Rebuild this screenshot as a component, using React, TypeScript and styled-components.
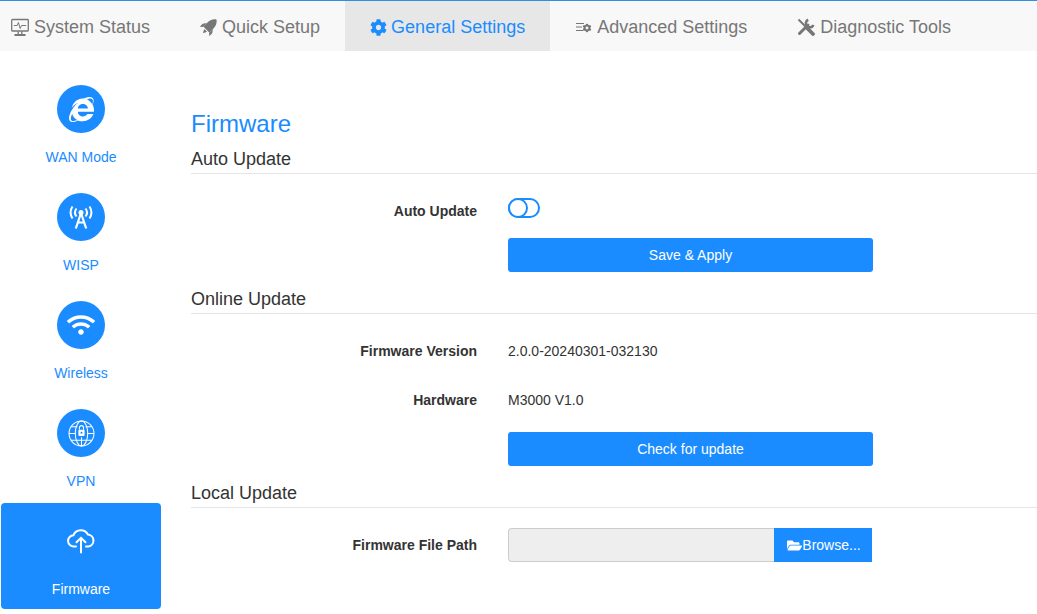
import React from "react";
import styled, { createGlobalStyle } from "styled-components";
import { FaCog, FaFolderOpen, FaInternetExplorer, FaWifi } from "react-icons/fa";

const BLUE = "#1a8cff";

const GlobalStyle = createGlobalStyle`
  html, body {
    margin: 0;
    padding: 0;
    background: #fff;
    overflow: hidden;
    font-family: "Liberation Sans", Arial, sans-serif;
    font-size: 14px;
    color: #333;
  }
`;

function MonitorIcon() {
  return (
    <svg width="18" height="19" viewBox="0 0 18 19" fill="none" stroke="#777" strokeWidth="1.3">
      <rect x="0.7" y="1.5" width="16.6" height="11.5" rx="0.8" />
      <path d="M2.8 7.5h3.4l1.2-3 1.8 6 1.3-3h4.7" strokeWidth="1" />
      <path d="M7.2 13.5v2.6M10.8 13.5v2.6" />
      <path d="M3.5 17h11" strokeWidth="2" />
    </svg>
  );
}

function RocketIcon() {
  return (
    <svg width="17" height="17" viewBox="0 0 17 17" fill="#777">
      <g transform="rotate(45 8.5 8.5)">
        <path d="M8.5-2.8C11.600-.6 12.800 2.500 12.800 6v5.500H4.200V6c0-3.500 1.200-6.600 4.300-8.800Z" />
        <path d="M4.200 6.500 1.800 10v4l2.400-2ZM12.800 6.500l2.400 3.500v4l-2.400-2Z" />
        <path d="M6.500 12.500h4L8.500 16.500Z" />
      </g>
    </svg>
  );
}

function AdvancedIcon() {
  return (
    <svg width="17" height="13" viewBox="0 0 17 13" fill="none" stroke="#777" strokeWidth="1.2">
      <path d="M1 2.500h8M1 6h6M1 9.500h7" />
      <FaCog x={7.500} y={2.500} size={9} color="#777" stroke="none" />
    </svg>
  );
}

function ToolsIcon() {
  return (
    <svg width="18" height="18" viewBox="0 0 18 18" fill="none" stroke="#777">
      <path d="M2.500 15.500 11 7" strokeWidth="3" strokeLinecap="round" />
      <path d="M11.200 1.700A4 4 0 1 0 16.500 7" strokeWidth="2.600" />
      <path d="M1.500 1.500 9 9" strokeWidth="2" />
      <path d="M10.500 10.500l5.500 5.500" strokeWidth="3.800" strokeLinecap="round" />
    </svg>
  );
}

function TowerIcon() {
  return (
    <svg width="24" height="23" viewBox="0 0 24 23" fill="none" stroke="#fff">
      <circle cx="12" cy="6.500" r="2.500" fill="#fff" stroke="none" />
      <path d="M12 7 6.800 22.500M12 7l5.200 15.500M8.800 16.500h6.400" strokeWidth="2.200" />
      <path d="M7.500 2.500a6.500 6.500 0 0 0 0 8M16.500 2.500a6.500 6.500 0 0 1 0 8" strokeWidth="2" />
      <path d="M3.500.5a11 11 0 0 0 0 12M20.500.5a11 11 0 0 1 0 12" strokeWidth="2" />
    </svg>
  );
}

function GlobeLockIcon() {
  return (
    <svg width="27" height="27" viewBox="0 0 26 26" fill="none" stroke="#fff" strokeWidth="1">
      <circle cx="13" cy="13" r="12" />
      <ellipse cx="13" cy="13" rx="6" ry="12" />
      <path d="M13 16.500V25M1 13h6.500M18.500 13H25M3 6.500h6M17 6.500h6M3 19.500h20" />
      <rect x="10" y="9.500" width="6" height="6" rx="1" fill="#fff" stroke="none" />
      <path d="M11 9.500V7.400a2 2 0 0 1 4 0v2.100" />
      <circle cx="13" cy="12.300" r="1" fill={BLUE} stroke="none" />
    </svg>
  );
}

function CloudUploadIcon() {
  return (
    <svg width="28" height="26" viewBox="0 0 28 26" fill="none" stroke="#fff" strokeWidth="2">
      <path d="M9 18.500H7a5.600 5.600 0 0 1-.6-11.200A8 8 0 0 1 21 6.600a6 6 0 0 1 .4 11.900H19" strokeLinecap="round" />
      <path d="M14 24.500V10M9.500 14.300 14 9.800l4.500 4.500" strokeLinecap="round" />
    </svg>
  );
}

const tabs = [
  { label: "System Status", icon: <MonitorIcon /> },
  { label: "Quick Setup", icon: <RocketIcon /> },
  { label: "General Settings", icon: <FaCog size={17} />, active: true },
  { label: "Advanced Settings", icon: <AdvancedIcon /> },
  { label: "Diagnostic Tools", icon: <ToolsIcon /> },
];

const menu = [
  { label: "WAN Mode", icon: <FaInternetExplorer size={25} /> },
  { label: "WISP", icon: <TowerIcon /> },
  { label: "Wireless", icon: <FaWifi size={28} /> },
  { label: "VPN", icon: <GlobeLockIcon /> },
  { label: "Firmware", icon: <CloudUploadIcon />, active: true },
];

export default function App() {
  return (
    <>
      <GlobalStyle />
      <TopNav>
        {tabs.map((tab) => (
          <Tab key={tab.label} $active={tab.active}>
            <TabIcon>{tab.icon}</TabIcon>
            {tab.label}
          </Tab>
        ))}
      </TopNav>
      <Body>
        <SideMenu>
          {menu.map((item) => (
            <MenuItem key={item.label} $active={item.active}>
              <MenuCircle>{item.icon}</MenuCircle>
              <MenuLabel>{item.label}</MenuLabel>
            </MenuItem>
          ))}
        </SideMenu>
        <Content>
          <PageTitle>Firmware</PageTitle>

          <SectionTitle>Auto Update</SectionTitle>
          <FormRow $height={47}>
            <FieldLabel>Auto Update</FieldLabel>
            <Toggle />
          </FormRow>
          <ButtonRow $top={17}>
            <PrimaryButton>Save &amp; Apply</PrimaryButton>
          </ButtonRow>

          <SectionTitle>Online Update</SectionTitle>
          <FormRow $height={47}>
            <FieldLabel>Firmware Version</FieldLabel>
            <FieldValue>2.0.0-20240301-032130</FieldValue>
          </FormRow>
          <FormRow $height={49}>
            <FieldLabel>Hardware</FieldLabel>
            <FieldValue>M3000 V1.0</FieldValue>
          </FormRow>
          <ButtonRow $top={22}>
            <PrimaryButton>Check for update</PrimaryButton>
          </ButtonRow>

          <SectionTitle>Local Update</SectionTitle>
          <FileRow>
            <FieldLabel>Firmware File Path</FieldLabel>
            <FileInput />
            <BrowseButton>
              <FaFolderOpen size={15} />
              Browse...
            </BrowseButton>
          </FileRow>
        </Content>
      </Body>
    </>
  );
}

const TopNav = styled.nav`
  display: flex;
  height: 50px;
  padding-left: 11px;
  background: #f8f8f8;
  border-top: 1px solid #2f8fe0;
`;

const Tab = styled.div<{ $active?: boolean }>`
  display: flex;
  align-items: center;
  gap: ${({ $active }) => ($active ? "4px" : "5px")};
  padding: 2px 25px 0;
  font-size: 18px;
  color: ${({ $active }) => ($active ? BLUE : "#777")};
  background: ${({ $active }) => ($active ? "#e7e7e7" : "transparent")};

  &:first-child {
    padding-left: 0;
  }
`;

const TabIcon = styled.span`
  display: flex;
  align-items: center;
`;

const Body = styled.div`
  display: flex;
`;

const SideMenu = styled.aside`
  display: flex;
  flex-direction: column;
  gap: 2px;
  width: 160px;
  margin-left: 1px;
  padding-top: 20px;
  flex-shrink: 0;
`;

const MenuItem = styled.div<{ $active?: boolean }>`
  display: flex;
  flex-direction: column;
  align-items: center;
  height: 106px;
  padding-top: 14px;
  box-sizing: border-box;
  border-radius: 4px;
  background: ${({ $active }) => ($active ? BLUE : "transparent")};
  color: ${({ $active }) => ($active ? "#fff" : BLUE)};
`;

const MenuCircle = styled.div`
  display: flex;
  align-items: center;
  justify-content: center;
  width: 48px;
  height: 48px;
  border-radius: 50%;
  background: ${BLUE};
  color: #fff;
`;

const MenuLabel = styled.div`
  margin-top: 16px;
  font-size: 14px;
  line-height: 16px;
`;

const Content = styled.main`
  flex: 1;
  margin-left: 30px;
  padding-top: 58px;
`;

const PageTitle = styled.h1`
  margin: 0;
  height: 40px;
  font-size: 24px;
  font-weight: 400;
  line-height: 30px;
  color: ${BLUE};
`;

const SectionTitle = styled.h2`
  margin: 0;
  height: 24px;
  font-size: 18px;
  font-weight: 400;
  line-height: 20px;
  color: #333;
  border-bottom: 1px solid #e5e5e5;
`;

const FormRow = styled.div<{ $height: number }>`
  display: flex;
  align-items: flex-end;
  height: ${({ $height }) => $height}px;
`;

const FieldLabel = styled.label`
  width: 286px;
  flex-shrink: 0;
  font-size: 14px;
  font-weight: 700;
  line-height: 20px;
  text-align: right;
  color: #333;
`;

const FieldValue = styled.div`
  margin-left: 31px;
  font-size: 14px;
  line-height: 20px;
  color: #333;
`;

const Toggle = styled.div`
  position: relative;
  width: 32px;
  height: 20px;
  margin: 0 0 3px 31px;
  box-sizing: border-box;
  border: 2px solid ${BLUE};
  border-radius: 10px;

  &::before {
    content: "";
    position: absolute;
    left: -2px;
    top: -2px;
    width: 20px;
    height: 20px;
    box-sizing: border-box;
    border: 2px solid ${BLUE};
    border-radius: 50%;
    background: #fff;
  }
`;

const ButtonRow = styled.div<{ $top: number }>`
  display: flex;
  margin: ${({ $top }) => $top}px 0 17px 317px;
`;

const PrimaryButton = styled.button`
  width: 365px;
  height: 34px;
  padding: 0;
  border: 0;
  border-radius: 3px;
  background: ${BLUE};
  color: #fff;
  font-family: inherit;
  font-size: 14px;
`;

const FileRow = styled.div`
  display: flex;
  align-items: center;
  margin-top: 20px;
`;

const FileInput = styled.div`
  width: 266px;
  height: 34px;
  margin-left: 31px;
  box-sizing: border-box;
  background: #eee;
  border: 1px solid #ccc;
  border-right: 0;
  border-radius: 4px 0 0 4px;
`;

const BrowseButton = styled.button`
  display: flex;
  align-items: center;
  justify-content: center;
  width: 98px;
  height: 34px;
  padding: 0 0 0 2px;
  border: 0;
  background: ${BLUE};
  color: #fff;
  font-family: inherit;
  font-size: 14px;
`;
